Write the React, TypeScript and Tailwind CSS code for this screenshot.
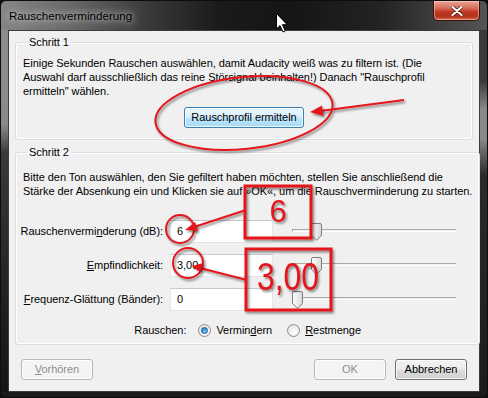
import React from "react";

const RED = "#e3171d";

function Thumb({ pos }: { pos: string }) {
  return (
    <svg width="11" height="18" viewBox="0 0 11 18" className={`absolute top-[3px] ${pos}`}>
      <defs>
        <linearGradient id="thumbFill" x1="0" y1="0" x2="1" y2="0">
          <stop offset="0" stopColor="#ffffff" />
          <stop offset="1" stopColor="#d8d8d8" />
        </linearGradient>
      </defs>
      <path d="M0.5 2 Q0.5 0.5 2 0.5 H9 Q10.5 0.5 10.5 2 V12.5 L5.5 17.2 L0.5 12.5 Z" fill="url(#thumbFill)" stroke="#7d7d7d" />
    </svg>
  );
}

function Slider({ pos }: { pos: string }) {
  return (
    <div className="relative h-[23px] w-[164px]">
      <div className="absolute left-0 top-[9px] h-[3px] w-[164px] border-l border-t border-[#a9a9a9] border-b-white border-b" />
      <Thumb pos={pos} />
    </div>
  );
}

function Field({ label, value, pos }: { label: React.ReactNode; value: string; pos: string }) {
  return (
    <div className="flex h-[23px] items-center">
      <div className="flex w-[140px] justify-end whitespace-nowrap">{label}</div>
      <div className="ml-[7px] flex h-[23px] w-[103px] items-center border border-[#e2e6ea] border-t-[#c5c9ce] bg-white pl-[6px]">
        {value}
      </div>
      <div className="ml-[19px]">
        <Slider pos={pos} />
      </div>
    </div>
  );
}

function Radio({ on }: { on?: boolean }) {
  return (
    <span className="flex h-[13px] w-[13px] items-center justify-center rounded-full border border-[#8e8f8f] bg-[radial-gradient(circle_at_60%_65%,#ffffff,#dcdcdc)]">
      {on && (
        <span className="h-[7px] w-[7px] rounded-full border border-[#1b5a8f] bg-[radial-gradient(circle_at_60%_70%,#6ed0ff,#1c6fb4)]" />
      )}
    </span>
  );
}

function WinButton({ children, disabled, hot, w }: { children: React.ReactNode; disabled?: boolean; hot?: boolean; w: string }) {
  const look = disabled
    ? "border-[#b5b9bc] bg-[#f4f4f4] text-[#8d8d8d]"
    : hot
      ? "border-[#3c7fb1] bg-[linear-gradient(#eaf6fd_0%,#d9f0fc_48%,#bee6fd_52%,#a7d9f5_100%)] text-black"
      : "border-[#707070] bg-[linear-gradient(#f2f2f2_0%,#ebebeb_48%,#dddddd_52%,#cfcfcf_100%)] text-black";
  return (
    <div className={`flex h-[21px] items-center justify-center whitespace-nowrap rounded-[3px] border shadow-[inset_0_0_0_1px_rgba(255,255,255,0.8)] ${w} ${look}`}>
      {children}
    </div>
  );
}

export default function App() {
  return (
    <div className="relative h-[398px] w-[488px] overflow-hidden bg-[#111] font-['Liberation_Sans',Arial,sans-serif] text-[11px] tracking-[-0.05px] text-black">
      {/* title bar */}
      <div className="flex h-[30px] items-start rounded-t-[6px] border border-b-0 border-[#0d0d0d] bg-[linear-gradient(90deg,#858585_0%,#6a6a6a_14%,#3a3a3a_30%,#1a1a1a_45%,#151515_60%,#232323_78%,#555555_100%)]">
        <div className="ml-[8px] mt-[7px] whitespace-nowrap text-[11.6px] leading-[16px] tracking-normal [text-shadow:0_0_6px_rgba(225,225,225,0.95),0_0_12px_rgba(200,200,200,0.8)]">
          Rauschenverminderung
        </div>
        <div className="flex-1" />
        <div className="mr-[7px] flex h-[20px] w-[47px] items-center justify-center rounded-b-[5px] border border-t-0 border-[#3b0f08] bg-[linear-gradient(#e9a897_0%,#d46a55_40%,#c23b22_55%,#b0301a_80%,#d86a4e_100%)] shadow-[inset_0_0_0_1px_rgba(255,220,210,0.5)]">
          <svg width="12" height="10" viewBox="0 0 12 10">
            <path d="M1.5 1 L10.5 9 M10.5 1 L1.5 9" stroke="#5a1a10" strokeWidth="3.6" strokeLinecap="round" />
            <path d="M1.5 1 L10.5 9 M10.5 1 L1.5 9" stroke="#ffffff" strokeWidth="2.2" strokeLinecap="round" />
          </svg>
        </div>
      </div>

      <div className="flex h-[362px]">
        <div className="w-[8px] border-l border-[#0d0d0d] bg-[linear-gradient(#8d8d8d_0%,#8a8a8a_26%,#3a3a3a_34%,#232323_70%,#151515_100%)]" />
        {/* client */}
        <div className="flex w-[472px] flex-col border border-[#3c3c3c] bg-[#f0f0f0] px-[6px] pt-[4px]">
          <fieldset className="rounded-[3px] border border-[#d5dfe5] px-[7px] pb-[11px] shadow-[inset_0_0_0_1px_#fff]">
            <legend className="ml-[4px] px-[2px] leading-[15px]">Schritt 1</legend>
            <p className="mt-[6px] whitespace-nowrap leading-[14px]">
              Einige Sekunden Rauschen auswählen, damit Audacity weiß was zu filtern ist. (Die
              <br />
              Auswahl darf ausschließlich das reine Störsignal beinhalten!) Danach "Rauschprofil
              <br />
              ermitteln" wählen.
            </p>
            <div className="mt-[9px] flex justify-center">
              <WinButton hot w="w-[120px]">Rauschprofil ermitteln</WinButton>
            </div>
          </fieldset>

          <fieldset className="mt-[5px] rounded-[3px] border border-[#d5dfe5] px-[7px] pb-[6px] shadow-[inset_0_0_0_1px_#fff]">
            <legend className="ml-[4px] px-[2px] leading-[15px]">Schritt 2</legend>
            <p className="mt-[10px] whitespace-nowrap leading-[14px]">
              Bitte den Ton auswählen, den Sie gefiltert haben möchten, stellen Sie anschließend die
              <br />
              Stärke der Absenkung ein und Klicken sie auf »OK«, um die Rauschverminderung zu starten.
            </p>
            <div className="mt-[22px] flex flex-col gap-[11px]">
              <Field
                label={<span>Rauschenvermi<span className="underline">n</span>derung (dB):</span>}
                value="6"
                pos="left-[19px]"
              />
              <Field
                label={<span><span className="underline">E</span>mpfindlichkeit:</span>}
                value="3,00"
                pos="left-[19px]"
              />
              <Field
                label={<span><span className="underline">F</span>requenz-Glättung (Bänder):</span>}
                value="0"
                pos="left-0"
              />
            </div>
            <div className="mt-[12px] flex h-[15px] items-center justify-center whitespace-nowrap">
              <span>Rauschen:</span>
              <span className="ml-[12px]"><Radio on /></span>
              <span className="ml-[5px]">Vermin<span className="underline">d</span>ern</span>
              <span className="ml-[15px]"><Radio /></span>
              <span className="ml-[5px]"><span className="underline">R</span>estmenge</span>
            </div>
          </fieldset>

          <div className="mt-[14px] flex items-center px-[6px]">
            <WinButton disabled w="w-[72px]"><span><span className="underline">V</span>orhören</span></WinButton>
            <div className="flex-1" />
            <WinButton disabled w="w-[72px]">OK</WinButton>
            <div className="ml-[9px]">
              <WinButton w="w-[72px]">Abbrechen</WinButton>
            </div>
          </div>
        </div>
        <div className="w-[8px] border-r border-[#0d0d0d] bg-[linear-gradient(#3a3a3a_0%,#3a3a3a_14%,#8a8a8a_22%,#8a8a8a_30%,#2a2a2a_40%,#1c1c1c_100%)]" />
      </div>
      <div className="h-[6px] rounded-b-[6px] border border-t-0 border-[#0d0d0d] bg-[#1c1c1c]" />

      {/* annotations */}
      <svg className="pointer-events-none absolute left-0 top-0" width="488" height="398" viewBox="0 0 488 398">
        <defs>
          <filter id="sh" x="-20%" y="-20%" width="140%" height="140%">
            <feDropShadow dx="1.5" dy="2" stdDeviation="1.2" floodColor="#000" floodOpacity="0.45" />
          </filter>
        </defs>
        <g filter="url(#sh)" fill="none" stroke={RED} strokeWidth="2">
          <ellipse cx="244" cy="113" rx="89" ry="36" transform="rotate(-6 244 113)" />
          <line x1="404" y1="100" x2="320" y2="111" />
          <ellipse cx="180" cy="229" rx="14" ry="14" />
          <line x1="246" y1="210" x2="194" y2="227" />
          <ellipse cx="188" cy="263" rx="15" ry="15" />
          <line x1="247" y1="280" x2="200" y2="268" />
          <rect x="245" y="186" width="66" height="52" strokeWidth="3" />
          <rect x="246" y="249" width="85" height="61" strokeWidth="3" />
        </g>
        <g filter="url(#sh)" fill={RED}>
          <path d="M310 112 L322 105.5 L323.5 116 Z" />
          <path d="M185 230 L195 222 L198 231 Z" />
          <path d="M192 266 L203 263 L200 272 Z" />
          <text x="278" y="222" textAnchor="middle" fontFamily="Liberation Sans, Arial, sans-serif" fontSize="31">6</text>
          <text x="257" y="290" textLength="62" lengthAdjust="spacingAndGlyphs" fontFamily="Liberation Sans, Arial, sans-serif" fontSize="39">3,00</text>
        </g>
        {/* mouse pointer */}
        <path d="M276.5 13.5 L276.5 29 L280 25.6 L283 32 L285.3 31 L282.4 24.7 L287.2 24.7 Z" fill="#fff" stroke="#000" strokeWidth="1" />
      </svg>
    </div>
  );
}
